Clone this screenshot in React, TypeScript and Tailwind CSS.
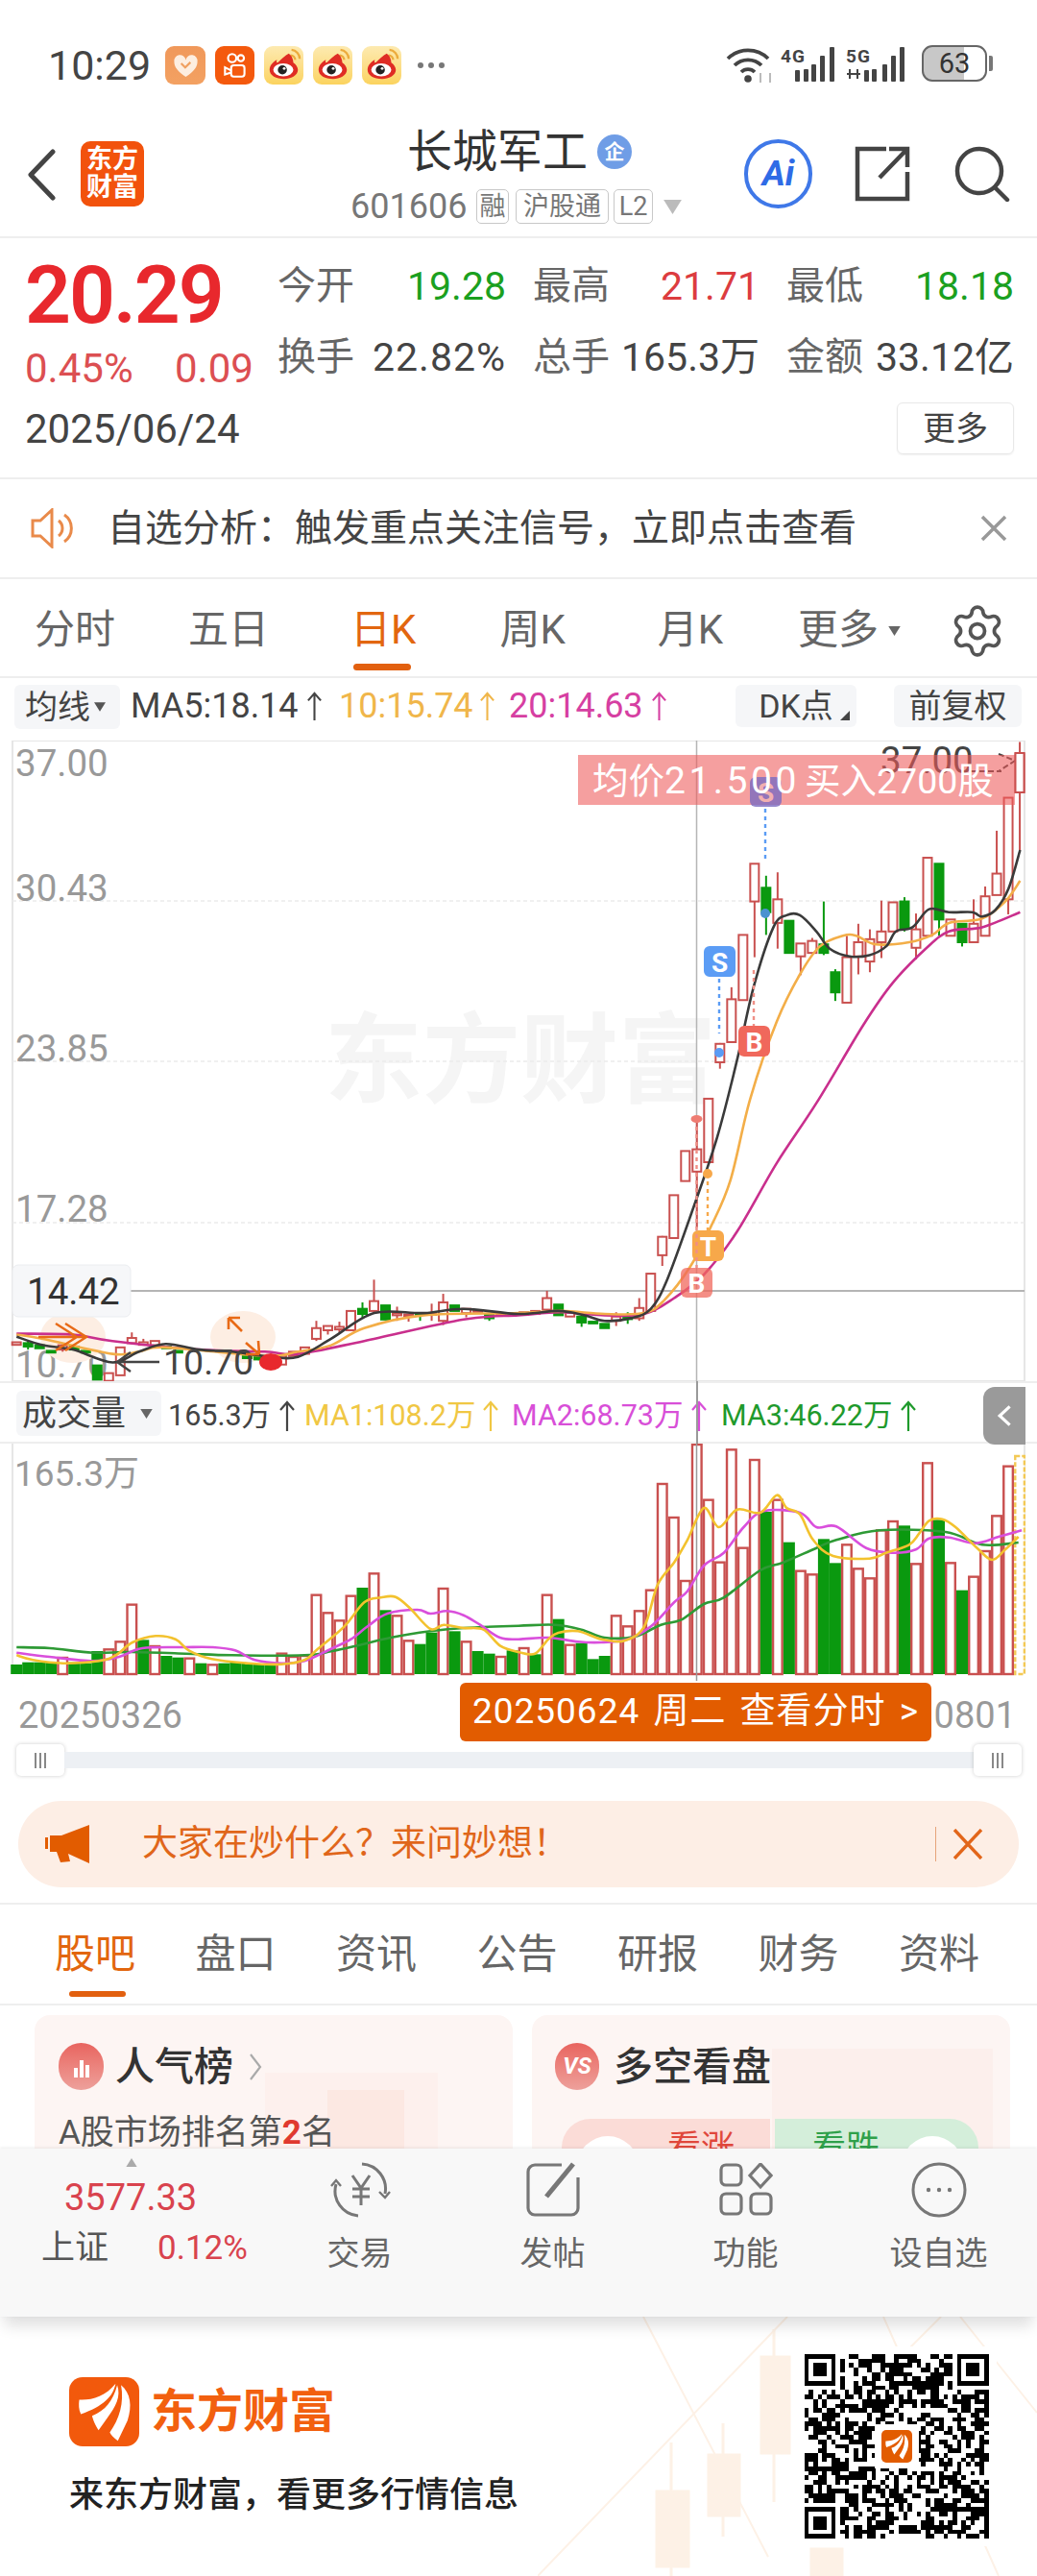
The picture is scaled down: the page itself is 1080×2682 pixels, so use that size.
import { Settings } from 'lucide-react';

type Pt = [number, number];

// x,y were read off the chart at different scales, these bring them back to page pixels
const priceY = (v: number) => 760 + v / 2.24;
const volY = (v: number) => 1430 + v / 3;
const barX = (i: number) => 17.2 + 12.01 * i;

const smooth = (pts: Pt[]) => {
  let d = `M${pts[0][0]} ${pts[0][1]}`;
  for (let i = 0; i < pts.length - 1; i++) {
    const p0 = pts[Math.max(i - 1, 0)];
    const p1 = pts[i];
    const p2 = pts[i + 1];
    const p3 = pts[Math.min(i + 2, pts.length - 1)];
    const c1x = p1[0] + (p2[0] - p0[0]) / 6;
    const c1y = p1[1] + (p2[1] - p0[1]) / 6;
    const c2x = p2[0] - (p3[0] - p1[0]) / 6;
    const c2y = p2[1] - (p3[1] - p1[1]) / 6;
    d += `C${c1x.toFixed(1)} ${c1y.toFixed(1)} ${c2x.toFixed(1)} ${c2y.toFixed(1)} ${p2[0].toFixed(1)} ${p2[1].toFixed(1)}`;
  }
  return d;
};

const line = (left: number[][], right: number[][], toY: (v: number) => number) =>
  smooth([
    ...left.map(([x, y]) => [x / 2.9, toY(y)] as Pt),
    ...right.map(([x, y]) => [540 + x / 2.9, toY(y)] as Pt),
  ]);

const ma5 = line(
  [[50,1415],[130,1435],[220,1445],[340,1475],[420,1450],[500,1432],[600,1445],[700,1450],[820,1462],[900,1462],[1000,1420],[1130,1360],[1280,1360],[1400,1350]],
  [[0,1362],[120,1355],[200,1365],[260,1378],[340,1372],[400,1350],[450,1280],[530,1110],[600,950],[660,770],[710,600],[770,460],[810,432],[850,432],[900,470],[940,510],[1000,528],[1060,525],[1110,505],[1140,470],[1190,460],[1240,418],[1300,425],[1370,425],[1400,435],[1440,420],[1480,370],[1515,280]],
  priceY,
);
const ma10 = line(
  [[50,1410],[130,1420],[340,1455],[420,1450],[500,1440],[800,1460],[900,1450],[1000,1435],[1100,1395],[1280,1365]],
  [[0,1360],[130,1355],[260,1362],[380,1360],[440,1330],[520,1250],[580,1160],[640,1050],[700,860],[780,680],[850,570],[910,505],[980,480],[1020,480],[1080,500],[1180,495],[1250,478],[1300,450],[1400,440],[1470,400],[1515,352]],
  priceY,
);
const ma20 = line(
  [[50,1408],[220,1410],[340,1425],[600,1445],[800,1450],[900,1455],[1100,1425],[1400,1375]],
  [[0,1365],[130,1358],[260,1365],[380,1362],[470,1325],[560,1270],[660,1170],[780,1010],[900,870],[1040,690],[1130,590],[1230,510],[1300,470],[1400,460],[1515,425]],
  priceY,
);

const vol1 = line(
  [[50,880],[100,895],[190,905],[300,898],[350,880],[400,840],[470,820],[530,830],[570,865],[640,892],[750,905],[850,908],[920,895],[960,860],[1040,790],[1100,715],[1150,700],[1195,698],[1240,735],[1300,798],[1340,785],[1400,795],[1460,800],[1510,850]],
  [[0,870],[50,875],[90,830],[120,810],[180,805],[250,830],[320,835],[380,790],[420,660],[470,590],[510,520],[560,420],[605,480],[660,425],[730,435],[780,380],[810,420],[850,440],[890,520],[950,570],[1060,578],[1110,560],[1180,535],[1210,500],[1240,460],[1280,455],[1320,480],[1385,545],[1430,582],[1470,550],[1510,510]],
  volY,
);
const vol2 = line(
  [[50,872],[150,885],[280,898],[360,885],[430,858],[560,855],[640,855],[710,865],[770,895],[850,905],[920,898],[1000,860],[1060,830],[1110,790],[1170,750],[1260,738],[1300,750],[1350,742],[1400,755],[1450,785],[1510,825]],
  [[0,830],[90,825],[180,838],[250,840],[330,830],[400,790],[470,715],[510,680],[560,600],[620,560],[680,480],[740,430],[850,435],[900,480],[960,478],[1050,545],[1130,560],[1200,550],[1240,515],[1300,512],[1380,530],[1450,510],[1520,490]],
  volY,
);
const vol3 = line(
  [[50,855],[150,858],[280,872],[400,870],[560,875],[700,880],[920,880],[1000,868],[1080,850],[1180,825],[1300,805],[1400,795]],
  [[0,788],[110,785],[190,800],[260,825],[350,822],[430,785],[490,770],[560,720],[620,700],[730,615],[800,590],[900,545],[960,520],[1090,490],[1290,495],[1400,535],[1510,528]],
  volY,
);

// index, body top, body bottom, wick top, wick bottom, up
const candles: [number, number, number, number, number, boolean][] = [
  [0,1428,1434,1428,1434,true],[1,1430,1438,1425,1445,false],[2,1435,1442,1435,1442,false],[3,1448,1452,1448,1452,false],
  [4,1435,1445,1430,1450,true],[5,1438,1445,1438,1445,false],[6,1448,1452,1448,1452,false],[7,1482,1515,1482,1515,false],
  [8,1500,1518,1500,1518,true],[9,1440,1505,1440,1505,true],[10,1418,1430,1405,1432,true],[11,1428,1434,1420,1434,true],
  [12,1425,1435,1425,1435,true],[13,1438,1442,1438,1442,false],[14,1448,1452,1448,1452,false],[20,1458,1465,1458,1465,false],
  [21,1460,1468,1450,1470,false],[23,1460,1480,1460,1480,true],[24,1450,1460,1450,1460,true],[25,1440,1455,1440,1455,true],
  [26,1395,1420,1378,1425,true],[27,1390,1400,1390,1410,true],[28,1392,1398,1380,1405,true],[29,1355,1400,1355,1400,true],
  [30,1350,1362,1335,1372,false],[31,1332,1355,1282,1360,true],[32,1342,1375,1342,1375,false],[33,1360,1365,1345,1378,true],
  [34,1363,1367,1363,1380,true],[35,1360,1364,1360,1378,false],[36,1360,1364,1338,1378,true],[37,1335,1378,1315,1388,true],
  [38,1342,1355,1342,1355,false],[39,1350,1360,1350,1370,true],[40,1353,1357,1353,1357,true],[41,1362,1372,1362,1378,false],
  [42,1360,1364,1360,1364,true],[44,1358,1362,1358,1362,true],[45,1355,1362,1355,1362,true],[46,1325,1352,1308,1355,true],
  [47,1340,1365,1340,1365,false],[48,1358,1368,1358,1368,true],[49,1368,1382,1368,1392,false],[50,1380,1384,1380,1384,false],
  [51,1385,1395,1385,1395,false],[52,1368,1378,1358,1390,true],[53,1370,1374,1358,1385,false],[54,1348,1372,1325,1378,true],
  [55,1268,1355,1268,1355,true],[56,1182,1225,1180,1250,true],[57,1085,1185,1085,1185,true],[58,982,1052,982,1052,true],
  [59,978,1030,905,1160,true],[60,860,1008,860,1008,true],[61,732,775,730,790,true],[62,628,728,600,728,true],
  [63,478,630,478,630,true],[64,312,400,312,530,true],[65,368,425,340,478,false],[66,395,450,332,510,true],
  [67,445,520,445,520,false],[68,498,528,498,572,true],[69,492,520,485,520,true],[70,500,520,400,525,false],
  [71,565,612,558,632,false],[72,530,636,480,636,true],[73,495,528,452,570,true],[74,488,540,465,565,true],
  [75,470,495,398,532,true],[76,402,470,402,470,true],[77,400,462,390,470,false],[78,465,508,428,535,true],
  [79,298,480,298,480,true],[80,312,442,312,480,false],[81,442,480,442,480,true],[82,452,495,452,505,false],
  [83,452,495,395,495,true],[84,388,480,365,480,true],[85,335,385,235,385,true],[86,158,395,158,430,true],
  [87,55,145,28,280,true],
];

const volumes: [number, boolean][] = [
  [912,false],[905,false],[905,false],[905,false],[888,true],[905,false],[908,false],[870,false],[862,true],[838,true],[722,true],
  [835,false],[852,true],[885,false],[890,false],[890,true],[908,false],[910,true],[908,false],[905,false],[908,false],[912,false],
  [912,false],[875,true],[885,true],[882,true],[692,true],[748,true],[772,true],[695,true],[672,false],[625,true],[742,false],
  [757,true],[835,true],[848,false],[812,false],[672,true],[808,false],[838,true],[870,false],[878,false],[885,true],[868,false],
  [858,true],[880,false],[692,true],[770,false],[848,true],[845,false],[895,false],[885,false],[757,true],[790,true],[742,true],
  [677,true],[345,true],[450,true],[648,true],[222,true],[395,true],[590,true],[238,true],[545,true],[270,true],[435,false],
  [395,true],[530,false],[617,true],[628,true],[520,false],[595,false],[535,true],[610,true],[640,true],[490,true],[462,true],
  [478,false],[595,true],[280,true],[460,false],[592,true],[680,false],[635,true],[555,true],[445,true],[290,true],
];

const RED_LINE = '#c9504f';
const GREEN = '#0a990f';

// stand-in QR, same density and finder squares as the real one
const qrPath = () => {
  const n = 41;
  let seed = 20250624;
  let d = '';
  const finder = (x: number, y: number) => {
    if (x < 0 || y < 0 || x > 6 || y > 6) return null;
    const ring = Math.min(x, y, 6 - x, 6 - y);
    return ring !== 1;
  };
  for (let y = 0; y < n; y++) {
    for (let x = 0; x < n; x++) {
      seed = (seed * 1103515245 + 12345) & 0x7fffffff;
      let on = (seed >> 16) % 100 < 52;
      const f = finder(x, y) ?? finder(x - (n - 7), y) ?? finder(x, y - (n - 7));
      if (f !== null) on = f;
      else if ((x === 7 && (y < 8 || y >= n - 8)) || (y === 7 && (x < 8 || x >= n - 8)) || (x === n - 8 && y < 8) || (y === n - 8 && x < 8)) on = false;
      if (on) d += `M${x} ${y}h1v1h-1z`;
    }
  }
  return d;
};

const Tri = ({ className }: { className: string }) => (
  <svg viewBox="0 0 10 8" className={className}>
    <polygon points="0,0 10,0 5,8" fill="currentColor" />
  </svg>
);

const Up = ({ className }: { className: string }) => (
  <svg viewBox="0 0 18 34" className={className} fill="none" stroke="currentColor" strokeWidth="2.2">
    <path d="M9 3v30M2 11l7-8 7 8" />
  </svg>
);

const Wing = ({ className }: { className: string }) => (
  <svg viewBox="0 0 215 215" className={className} fill="#fff">
    <path d="M30 70C70 72 110 60 143 20C135 60 105 90 35 115C28 100 28 85 30 70Z" />
    <path d="M148 25C160 60 145 90 115 130L90 165C80 150 72 130 70 120C110 105 135 75 148 25Z" />
    <path d="M160 25C190 50 195 90 180 135L150 198C138 190 128 180 125 172C155 130 170 80 160 25Z" />
  </svg>
);

const Weibo = () => (
  <div className="w-[41px] h-[40px] rounded-[9px] bg-gradient-to-b from-[#fdeab0] to-[#fbd35e] flex items-center justify-center">
    <svg viewBox="0 0 40 40" className="w-[38px] h-[38px]">
      <path d="M28 3a10 10 0 0 1 9 10M27 9a5 5 0 0 1 5 5" stroke="#ecab3c" strokeWidth="2.4" fill="none" />
      <path d="M25 7c3 2 5 6 5 10 3 2 5 5 5 8 0 6-8 10-15 10C11 35 4 31 4 25c0-5 4-9 8-11-1 3 0 4 2 2 3-3 7-7 11-9z" fill="#df2c24" />
      <ellipse cx="19" cy="25" rx="11" ry="7" fill="#fff" />
      <circle cx="18" cy="25" r="5" fill="#222" />
      <circle cx="20" cy="23.5" r="1.5" fill="#fff" />
    </svg>
  </div>
);

const QuoteCell = ({ label, value, color }: { label: string; value: string; color: string }) => (
  <>
    <span className="text-[#666]">{label}</span>
    <span className={`text-[41px] ${color}`}>{value}</span>
  </>
);

const SmallBadge = ({ text, className }: { text: string; className: string }) => (
  <span className={`h-[36px] border border-[#c8c8c8] rounded-[5px] text-[27px] leading-[34px] text-center whitespace-nowrap text-[#777] ${className}`}>{text}</span>
);

const BottomTab = ({ label, icon }: { label: string; icon: React.ReactNode }) => (
  <div className="flex flex-col items-center text-[34px] leading-[40px] text-[#666]">
    <div className="h-[66px] mt-[10px] flex items-center justify-center">{icon}</div>
    <span className="mt-[13px]">{label}</span>
  </div>
);

const Handle = () => (
  <div className="w-[50px] h-[33px] bg-white rounded-[5px] shadow-[0_0_4px_rgba(0,0,0,0.2)] flex items-center justify-center gap-[3px] shrink-0">
    <i className="w-[2px] h-[16px] bg-[#888]" />
    <i className="w-[2px] h-[16px] bg-[#888]" />
    <i className="w-[2px] h-[16px] bg-[#888]" />
  </div>
);

const App = () => {
  return (
    <div className="relative w-[1080px] h-[2682px] overflow-hidden bg-white font-['Roboto','Noto_Sans_CJK_SC',sans-serif] text-[#333]">
      {/* status bar */}
      <div className="h-[130px] pt-[47px] pl-[50px] pr-[46px] flex items-start">
        <span className="text-[43px] leading-[42px] text-[#444] w-[122px]">10:29</span>
        <div className="flex gap-[10px] mt-[1px]">
          <div className="w-[42px] h-[40px] rounded-[9px] bg-gradient-to-b from-[#f0985a] to-[#f3a162] flex items-center justify-center">
            <svg viewBox="0 0 24 24" className="w-[29px] h-[29px]">
              <path d="M12 21.5C5 17 2 13 2 8.5a5 5 0 0 1 10-1.5 5 5 0 0 1 10 1.5c0 4.500-3 8.500-10 13z" fill="#fdeee0" />
              <path d="M8 10l3.500 3.500L16 9" stroke="#f0a060" strokeWidth="1.8" fill="none" />
            </svg>
          </div>
          <div className="w-[41px] h-[40px] rounded-[9px] bg-[#f4590d] flex items-center justify-center">
            <svg viewBox="0 0 24 30" className="w-[26px] h-[32px]" fill="none" stroke="#fff" strokeWidth="2">
              <circle cx="9" cy="8" r="4" />
              <circle cx="17.5" cy="8" r="3" />
              <rect x="8" y="15" width="13" height="11" rx="2.500" />
              <path d="M8 20l-6-3v7l6-2" />
            </svg>
          </div>
          <Weibo />
          <Weibo />
          <Weibo />
        </div>
        <div className="ml-[17px] mt-[18px] flex gap-[5px]">
          <i className="w-[6px] h-[6px] rounded-full bg-[#777]" />
          <i className="w-[6px] h-[6px] rounded-full bg-[#777]" />
          <i className="w-[6px] h-[6px] rounded-full bg-[#777]" />
        </div>
        <div className="ml-auto flex items-start">
          <svg viewBox="0 0 60 40" className="w-[60px] h-[40px] mt-[1px]" fill="none" stroke="#444" strokeWidth="3.8">
            <path d="M2 13a30 30 0 0 1 42 0M9 20a20 20 0 0 1 28 0M16 27a10 10 0 0 1 14 0" />
            <circle cx="23" cy="34" r="3.800" fill="#444" stroke="none" />
            <path d="M36 28v10M46 28v10" stroke="#bbb" strokeWidth="2" />
          </svg>
          <svg viewBox="0 0 56 38" className="w-[56px] h-[38px] -ml-[3px] mt-[1px]">
            <text x="0" y="17" fontSize="19" fontWeight="700" fill="#444" textLength="25">4G</text>
            {[[15, 25], [24, 24], [32, 19], [41, 10], [51, 1]].map(([x, top]) => (
              <rect key={x} x={x} y={top} width="5" height={37 - top} rx="1" fill="#444" />
            ))}
          </svg>
          <svg viewBox="0 0 62 38" className="w-[62px] h-[38px] ml-[12px] mt-[1px]">
            <text x="0" y="17" fontSize="19" fontWeight="700" fill="#444" textLength="25">5G</text>
            <path d="M4 24v10M12 24v10M1 29h14" stroke="#444" strokeWidth="2" />
            {[[19, 25], [27, 24], [38, 19], [47, 10], [56, 1]].map(([x, top]) => (
              <rect key={x} x={x} y={top} width="5" height={37 - top} rx="1" fill="#444" />
            ))}
          </svg>
          <div className="ml-[17px] flex items-center">
            <div className="w-[68px] h-[38px] rounded-[11px] border-[2px] border-[#666] bg-[linear-gradient(90deg,#c8c8c8_66%,#fff_66%)] text-[29px] leading-[34px] text-center text-[#333]">63</div>
            <div className="w-[4px] h-[16px] bg-[#777] rounded-r-[2px] ml-[2px]" />
          </div>
        </div>
      </div>

      {/* title bar */}
      <div className="h-[118px] flex items-start border-b-[2px] border-[#eeeeee]">
        <svg viewBox="0 0 30 54" className="w-[30px] h-[54px] ml-[28px] mt-[25px]" fill="none" stroke="#444" strokeWidth="5" strokeLinecap="round" strokeLinejoin="round">
          <polyline points="27,3 4,27 27,51" />
        </svg>
        <div className="ml-[26px] mt-[17px] w-[66px] h-[68px] rounded-[10px] bg-[#f2520c] text-white text-[27px] leading-[29px] font-bold text-center pt-[5px]">
          东方
          <br />
          财富
        </div>
        <div className="ml-[215px] w-[348px] flex flex-col">
          <div className="flex items-center ml-[59px] h-[52px] mt-[2px]">
            <span className="text-[47px] leading-[52px] text-[#333]">长城军工</span>
            <span className="ml-[10px] w-[36px] h-[36px] rounded-full bg-[#6f9de6] text-white text-[21px] leading-[36px] text-center font-bold">企</span>
          </div>
          <div className="flex items-center mt-[13px] text-[#777]">
            <span className="text-[36px] leading-[36px] w-[131px]">601606</span>
            <SmallBadge text="融" className="w-[34px]" />
            <SmallBadge text="沪股通" className="w-[97px] ml-[7px]" />
            <SmallBadge text="L2" className="w-[41px] ml-[5px]" />
            <Tri className="w-[21px] h-[15px] ml-[10px] text-[#bbb]" />
          </div>
        </div>
        <div className="ml-[62px] mt-[15px] w-[71px] h-[72px] rounded-full border-[4px] border-[#3f78e8] flex items-center justify-center text-[#2f6be6] text-[37px] font-bold italic">Ai</div>
        <svg viewBox="0 0 58 58" className="w-[58px] h-[58px] ml-[44px] mt-[22px]" fill="none" stroke="#444" strokeWidth="4.5">
          <path d="M33 3H3v52h52V27" />
          <path d="M26 33L55 3M36 3h19v19" />
        </svg>
        <svg viewBox="0 0 58 58" className="w-[58px] h-[58px] ml-[46px] mt-[22px]" fill="none" stroke="#444" strokeWidth="4.5" strokeLinecap="round">
          <circle cx="26" cy="26" r="23" />
          <path d="M42 43l13 13" />
        </svg>
      </div>

      {/* quote */}
      <div className="h-[251px] flex border-b-[2px] border-[#eeeeee] text-[40px] leading-[40px]">
        <div className="w-[289px] pl-[26px] shrink-0">
          <div className="mt-[18px] text-[84px] leading-[84px] font-semibold text-[#e8282d] tracking-[-2px]">20.29</div>
          <div className="mt-[14px] flex text-[42px] text-[#dc4f52]">
            <span className="w-[156px]">0.45%</span>
            <span>0.09</span>
          </div>
          <div className="mt-[23px] text-[#444] text-[42px]">2025/06/24</div>
        </div>
        <div className="flex-1 pr-[25px] flex flex-col">
          <div className="mt-[30px] flex gap-[28px]">
            <div className="w-[238px] flex justify-between"><QuoteCell label="今开" value="19.28" color="text-[#1ba01f]" /></div>
            <div className="w-[236px] flex justify-between"><QuoteCell label="最高" value="21.71" color="text-[#dc3c3f]" /></div>
            <div className="w-[237px] flex justify-between"><QuoteCell label="最低" value="18.18" color="text-[#1ba01f]" /></div>
          </div>
          <div className="mt-[34px] flex gap-[28px]">
            <div className="w-[238px] flex justify-between"><QuoteCell label="换手" value="22.82%" color="text-[#444] tracking-[1px]" /></div>
            <div className="w-[236px] flex justify-between"><QuoteCell label="总手" value="165.3万" color="text-[#444]" /></div>
            <div className="w-[237px] flex justify-between"><QuoteCell label="金额" value="33.12亿" color="text-[#444]" /></div>
          </div>
          <button className="mt-[27px] self-end w-[122px] h-[54px] rounded-[6px] border border-[#e8e8e8] shadow-[0_1px_2px_rgba(0,0,0,0.06)] text-[34px] text-[#444]">更多</button>
        </div>
      </div>

      {/* notice */}
      <div className="h-[104px] flex items-center border-b-[2px] border-[#eeeeee] pl-[31px] pr-[31px]">
        <svg viewBox="0 0 48 42" className="w-[48px] h-[42px]" fill="none" stroke="#e98a4a" strokeWidth="3">
          <path d="M3 13h8l12-11v38L11 29H3z" />
          <path d="M30 13a10 10 0 0 1 0 16M36 7a17 17 0 0 1 0 28" />
        </svg>
        <span className="ml-[33px] text-[39px] leading-[44px] text-[#444]">自选分析：触发重点关注信号，立即点击查看</span>
        <svg viewBox="0 0 28 28" className="ml-auto w-[28px] h-[28px]" stroke="#999" strokeWidth="3.5">
          <path d="M2 2l24 24M26 2L2 26" />
        </svg>
      </div>

      {/* period tabs */}
      <div className="relative h-[103px] border-b-[2px] border-[#eeeeee] flex text-[42px] leading-[44px] pt-[31px] text-[#666]">
        <span className="ml-[36px]">分时</span>
        <span className="ml-[76px]">五日</span>
        <span className="ml-[85px] text-[#e2660f]">日K</span>
        <span className="ml-[87px]">周K</span>
        <span className="ml-[96px]">月K</span>
        <span className="ml-[78px]">更多</span>
        <Tri className="w-[13px] h-[10px] ml-[10px] mt-[18px] text-[#666]" />
        <Settings className="w-[60px] h-[60px] ml-[50px] -mt-[7px]" strokeWidth={1.5} color="#555" />
        <div className="absolute left-[368px] bottom-[6px] w-[60px] h-[7px] rounded-full bg-[#e2600f]" />
      </div>

      {/* MA legend */}
      <div className="h-[65px] pt-[7px] flex items-start text-[36px] leading-[44px] whitespace-nowrap">
        <div className="ml-[15px] w-[110px] h-[46px] rounded-[6px] bg-[#f5f6f8] flex items-center pl-[11px] text-[34px] text-[#444]">
          均线
          <Tri className="w-[12px] h-[10px] ml-[4px] text-[#555]" />
        </div>
        <span className="ml-[11px] w-[217px] flex items-center text-[#444]">MA5:18.14<Up className="w-[17px] h-[36px] ml-[8px]" /></span>
        <span className="w-[177px] flex items-center text-[#f0b64a]">10:15.74<Up className="w-[17px] h-[36px] ml-[6px]" /></span>
        <span className="w-[236px] flex items-center text-[#d63fa2]">20:14.63<Up className="w-[17px] h-[36px] ml-[8px]" /></span>
        <div className="w-[126px] h-[44px] rounded-[6px] bg-[#f5f6f8] text-[34px] text-[#444] text-center relative">
          DK点
          <span className="absolute right-[7px] bottom-[7px] border-[5px] border-transparent border-r-[#444] border-b-[#444]" />
        </div>
        <div className="ml-[39px] w-[133px] h-[44px] rounded-[6px] bg-[#f5f6f8] text-[34px] text-[#444] text-center">前复权</div>
      </div>

      {/* price chart */}
      <svg viewBox="0 771 1080 667" className="block w-[1080px] h-[667px]">
        <rect x="13" y="771" width="1054" height="667" fill="#fff" stroke="#e6e6e6" strokeWidth="2" />
        <text x="338" y="1140" fontSize="102" fontWeight="700" fill="#f5f5f5">东方财富</text>
        {[938, 1105, 1273].map((y) => (
          <line key={y} x1="13" x2="1067" y1={y} y2={y} stroke="#ebebeb" strokeWidth="1.5" strokeDasharray="4 3" />
        ))}
        <g fontSize="38.5" fill="#999">
          <text x="16" y="808">37.00</text>
          <text x="16" y="938">30.43</text>
          <text x="16" y="1105">23.85</text>
          <text x="16" y="1272">17.28</text>
          <text x="16" y="1434">10.70</text>
        </g>
        <line x1="13" x2="1067" y1="1344" y2="1344" stroke="#b5b5b5" strokeWidth="2" />
        <line x1="725.5" x2="725.5" y1="771" y2="1438" stroke="#b5b5b5" strokeWidth="1.5" />
        <ellipse cx="76" cy="1392" rx="34" ry="27" fill="#fdeee3" />
        <ellipse cx="253" cy="1392" rx="34" ry="27" fill="#fdeee3" />

        {candles.map(([i, top, bot, wt, wb, up]) => {
          const x = barX(i);
          const c = up ? RED_LINE : GREEN;
          return (
            <g key={i}>
              <line x1={x} x2={x} y1={priceY(wt)} y2={priceY(wb)} stroke={c} strokeWidth="2" />
              <rect x={x - 4.5} y={priceY(top)} width="9" height={Math.max(priceY(bot) - priceY(top), 1)} fill={up ? '#fff' : c} stroke={c} strokeWidth="2" />
            </g>
          );
        })}

        <path d={ma20} fill="none" stroke="#c92f8d" strokeWidth="2.6" />
        <path d={ma10} fill="none" stroke="#f3ae48" strokeWidth="2.6" />
        <path d={ma5} fill="none" stroke="#3a3a3a" strokeWidth="2.6" />

        {/* lowest price marker and cost arrows */}
        <path d="M122 1418h44M136 1408l-14 10 14 10" fill="none" stroke="#444" strokeWidth="2.4" />
        <text x="170" y="1431" fontSize="37.5" fill="#444">10.70</text>
        <path d="M68 1378l22 14-22 14M58 1378l22 14-22 14M40 1392h48" fill="none" stroke="#e86a16" strokeWidth="2.4" />
        <path d="M238 1372l14 14M238 1372v12M238 1372h12M270 1410l-1-14M270 1410h-14M270 1410l-14-12" fill="none" stroke="#e86a16" strokeWidth="2.6" />
        <ellipse cx="282" cy="1418" rx="12" ry="9" fill="#e8282d" />

        {/* buy/sell flags */}
        <line x1="749" x2="749" y1="1019" y2="1076" stroke="#5b9cf5" strokeWidth="2.4" strokeDasharray="4 4" />
        <rect x="733" y="985" width="33" height="32" rx="6" fill="#5b9cf5" />
        <text x="749.5" y="1012" fontSize="28" fontWeight="700" fill="#fff" textAnchor="middle">S</text>
        <circle cx="749" cy="1096" r="5" fill="#5b9cf5" />

        <line x1="797" x2="797" y1="842" y2="898" stroke="#5b9cf5" strokeWidth="2.4" strokeDasharray="4 4" />
        <circle cx="797" cy="951" r="5" fill="#4a93d0" />

        <line x1="785" x2="785" y1="1010" y2="1068" stroke="#ef8f86" strokeWidth="2.4" strokeDasharray="4 4" />
        <rect x="769" y="1068" width="33" height="32" rx="6" fill="#f0685c" />
        <text x="785.5" y="1095" fontSize="28" fontWeight="700" fill="#fff" textAnchor="middle">B</text>

        <line x1="737" x2="737" y1="1222" y2="1281" stroke="#f7a84a" strokeWidth="2.4" strokeDasharray="4 4" />
        <circle cx="737" cy="1222" r="5" fill="#f7a84a" />
        <rect x="721" y="1281" width="33" height="32" rx="6" fill="#f7a84a" />
        <text x="737.5" y="1308" fontSize="28" fontWeight="700" fill="#fff" textAnchor="middle">T</text>

        <line x1="725.5" x2="725.5" y1="1165" y2="1320" stroke="#ef8f86" strokeWidth="2.4" strokeDasharray="4 4" />
        <ellipse cx="725.5" cy="1165" rx="6" ry="4" fill="#ef7c72" />
        <rect x="709" y="1320" width="33" height="31" rx="6" fill="#f0685c" fillOpacity="0.75" />
        <text x="725.5" y="1346" fontSize="28" fontWeight="700" fill="#fff" textAnchor="middle">B</text>

        {/* high price + average cost ribbon */}
        <text x="917" y="805" fontSize="38.5" fill="#444">37.00</text>
        <path d="M1011 803h32M1040 785l17 7-17 11" fill="none" stroke="#444" strokeWidth="2" strokeDasharray="6 3" />
        <rect x="602" y="786" width="455" height="52" fill="#ee5a5a" fillOpacity="0.58" />
        <rect x="781" y="809" width="33" height="31" rx="6" fill="#7a6ac0" fillOpacity="0.8" />
        <text x="797.5" y="835" fontSize="28" fontWeight="700" fill="#f2b0b0" textAnchor="middle">S</text>
        <text x="617" y="826" fontSize="37.5" fill="#fff">均价<tspan letterSpacing="3.5" fontSize="39">21.500</tspan></text>
        <text x="838" y="826" fontSize="37.5" fill="#fff">买入2700股</text>
        <rect x="1057.5" y="784" width="9" height="41" fill="#fff" stroke={RED_LINE} strokeWidth="2" />

        <rect x="13" y="1317" width="123" height="54" rx="6" fill="#f6f7f9" stroke="#ebedf0" />
        <text x="28" y="1358" fontSize="38.5" fill="#333">14.42</text>
      </svg>

      {/* volume legend */}
      <div className="relative h-[65px] border-y-[2px] border-[#eeeeee] flex items-start text-[30.5px] leading-[36px] pt-[16px] whitespace-nowrap">
        <div className="absolute left-[17px] top-[8px] w-[151px] h-[47px] rounded-[6px] bg-[#f5f6f8] flex items-center pl-[6px] text-[36px] text-[#444]">
          成交量
          <Tri className="w-[15px] h-[10px] ml-[14px] text-[#666]" />
        </div>
        <span className="ml-[175px] w-[142px] flex items-center text-[#444]">165.3万<Up className="w-[18px] h-[34px] ml-[8px]" /></span>
        <span className="w-[216px] flex items-center text-[#f0c744]">MA1:108.2万<Up className="w-[18px] h-[34px] ml-[7px]" /></span>
        <span className="w-[218px] flex items-center text-[#d84fd8]">MA2:68.73万<Up className="w-[18px] h-[34px] ml-[8px]" /></span>
        <span className="flex items-center text-[#1f9a2c]">MA3:46.22万<Up className="w-[18px] h-[34px] ml-[8px]" /></span>
        <div className="absolute right-[12px] top-[4px] w-[44px] h-[60px] rounded-l-[12px] bg-[#9a9a9a] flex items-center justify-center">
          <svg viewBox="0 0 20 30" className="w-[16px] h-[26px]" fill="none" stroke="#fff" strokeWidth="4">
            <polyline points="17,3 4,15 17,27" />
          </svg>
        </div>
      </div>

      {/* volume chart */}
      <svg viewBox="0 1503 1080 250" className="block w-[1080px] h-[250px]">
        <line x1="13" x2="13" y1="1503" y2="1743" stroke="#e6e6e6" strokeWidth="2" />
        <line x1="1067" x2="1067" y1="1503" y2="1743" stroke="#e6e6e6" strokeWidth="2" />
        <text x="15" y="1547" fontSize="37" fill="#999">165.3万</text>
        {volumes.map(([top, up], i) => {
          const x = barX(i);
          const y = volY(top);
          return up ? (
            <rect key={i} x={x - 4.8} y={y} width="9.6" height={1743 - y} fill="#fff" stroke={RED_LINE} strokeWidth="2.4" />
          ) : (
            <rect key={i} x={x - 6} y={y - 1} width="12" height={1744 - y} fill={GREEN} />
          );
        })}
        <rect x={barX(87) - 4.8} y={volY(258)} width="9.6" height={1743 - volY(258)} fill="#fff" stroke="#f3c955" strokeWidth="2.4" strokeDasharray="5 2" />
        <line x1="725.5" x2="725.5" y1="1503" y2="1750" stroke="#9a9a9a" strokeWidth="1.5" />
        <path d={vol3} fill="none" stroke="#2e9a35" strokeWidth="2.6" />
        <path d={vol2} fill="none" stroke="#d94fdc" strokeWidth="2.6" />
        <path d={vol1} fill="none" stroke="#f3c22e" strokeWidth="2.6" />
      </svg>

      {/* crosshair runs up through the volume legend */}
      <div className="absolute left-[725px] top-[1438px] w-[1.5px] h-[65px] bg-[#9a9a9a]" />

      {/* date axis */}
      <div className="h-[63px] relative flex items-start text-[38px] leading-[40px] text-[#999]">
        <span className="ml-[19px] mt-[13px]">20250326</span>
        <div className="absolute left-[479px] top-[-1px] w-[491px] h-[61px] rounded-[6px] bg-[#e25c00] text-white text-[37px] leading-[60px] text-center whitespace-pre tracking-[1px] [word-spacing:4px]">
          20250624 周二 查看分时 {'>'}
        </div>
        <span className="ml-auto mr-[22px] mt-[13px]">0801</span>
      </div>

      {/* range slider */}
      <div className="flex items-center pl-[17px] pr-[16px] h-[33px]">
        <Handle />
        <div className="flex-1 h-[17px] bg-[#edf0f4]" />
        <Handle />
      </div>

      {/* ask box */}
      <div className="mt-[26px] mx-[19px] h-[90px] rounded-[45px] bg-[#fdeee5] flex items-center pl-[28px] pr-[37px]">
        <svg viewBox="0 0 46 40" className="w-[46px] h-[40px]" fill="#e25c00">
          <path d="M0 13h3v12H0zM5 11h12L46 0v40L24 30l2 8-10 1-4-11H5z" />
        </svg>
        <span className="ml-[55px] text-[37px] leading-[44px] text-[#e0661a]">大家在炒什么？来问妙想！</span>
        <i className="ml-auto w-[1.5px] h-[36px] bg-[#e6a47a]" />
        <svg viewBox="0 0 32 32" className="ml-[17px] w-[32px] h-[32px]" stroke="#e2661a" strokeWidth="3.4">
          <path d="M2 1l28 30M30 1L2 31" />
        </svg>
      </div>

      {/* detail tabs */}
      <div className="relative mt-[16px] h-[107px] border-y-[2px] border-[#eeeeee] flex pl-[57px] gap-[62.5px] pt-[29px] text-[42px] leading-[46px] text-[#666]">
        <span className="text-[#e2660f]">股吧</span>
        <span>盘口</span>
        <span>资讯</span>
        <span>公告</span>
        <span>研报</span>
        <span>财务</span>
        <span>资料</span>
        <div className="absolute left-[72px] bottom-[7px] w-[59px] h-[6px] rounded-full bg-[#e2600f]" />
      </div>

      {/* cards, cut off by the bottom bar */}
      <div className="h-[149px] overflow-hidden flex gap-[20px] pl-[36px] pt-[10px]">
        <div className="relative shrink-0 w-[498px] h-[180px] rounded-[16px] bg-[#fdf5f3] overflow-hidden">
          <div className="absolute left-[240px] top-[60px] w-[180px] h-[120px] bg-[#fdf0ed]" />
          <div className="absolute left-[305px] top-[78px] w-[80px] h-[90px] bg-[#fce8e2]" />
          <div className="relative flex items-center pl-[25px] pt-[29px]">
            <div className="w-[47px] h-[49px] rounded-full bg-gradient-to-b from-[#e8645f] to-[#eda09b] flex items-end justify-center gap-[2px] pb-[13px]">
              <i className="w-[4px] h-[10px] bg-white" />
              <i className="w-[4px] h-[18px] bg-white" />
              <i className="w-[4px] h-[13px] bg-white" />
            </div>
            <span className="ml-[12px] text-[41px] leading-[46px] font-medium text-[#333]">人气榜</span>
            <svg viewBox="0 0 14 30" className="ml-[16px] w-[14px] h-[30px]" fill="none" stroke="#aaa" strokeWidth="2.2">
              <polyline points="2,2 12,15 2,28" />
            </svg>
          </div>
          <div className="relative mt-[24px] pl-[25px] text-[35px] leading-[42px] text-[#555]">
            A股市场排名第<span className="font-bold text-[#e0392f]">2</span>名
          </div>
        </div>
        <div className="relative shrink-0 w-[498px] h-[180px] rounded-[16px] bg-[#fdf5f3] overflow-hidden">
          <div className="absolute left-[250px] top-[35px] w-[230px] h-[120px] bg-[#fcefec]" />
          <div className="relative flex items-center pl-[24px] pt-[29px]">
            <div className="w-[46px] h-[49px] rounded-full bg-gradient-to-b from-[#e8645f] to-[#eda09b] text-white text-[24px] leading-[49px] text-center font-bold italic">VS</div>
            <span className="ml-[15px] text-[41px] leading-[46px] font-medium text-[#333]">多空看盘</span>
          </div>
          <div className="relative mt-[30px] ml-[31px] w-[434px] h-[60px] flex gap-[5px] text-[35px] leading-[42px]">
            <div className="relative w-[217px] h-[60px] bg-[#fbdcd7] rounded-l-[30px] text-[#e0473b] pl-[110px] pt-[10px] overflow-hidden">
              <span className="absolute left-[16px] top-[18px] w-[64px] h-[64px] rounded-full bg-white" />
              看涨
            </div>
            <div className="relative w-[212px] h-[60px] bg-[#d4eeda] rounded-r-[30px] text-[#2fa04a] pl-[39px] pt-[10px] overflow-hidden">
              <span className="absolute right-[16px] top-[18px] w-[64px] h-[64px] rounded-full bg-white" />
              看跌
            </div>
          </div>
        </div>
      </div>

      {/* bottom bar */}
      <div className="relative z-10 h-[175px] bg-[#f8f8f8] shadow-[0_-1px_3px_rgba(0,0,0,0.08),0_14px_14px_-4px_rgba(0,0,0,0.12)] grid grid-cols-[274px_201px_201px_201px_201px]">
        <div className="relative pl-[43px]">
          <Tri className="absolute left-[128px] top-[10px] w-[18px] h-[9px] rotate-180 text-[#aaa]" />
          <div className="pl-[24px] pt-[31px] text-[38px] leading-[40px] text-[#d9434e]">3577.33</div>
          <div className="mt-[13px] flex text-[35px] leading-[40px]">
            <span className="text-[#555]">上证</span>
            <span className="ml-[51px] text-[#d9434e]">0.12%</span>
          </div>
        </div>
        <BottomTab
          label="交易"
          icon={
            <svg viewBox="0 0 64 60" className="w-[64px] h-[60px]" fill="none" stroke="#777" strokeWidth="3">
              <path d="M34 3a26 26 0 0 1 24 31M30 57A26 26 0 0 1 7 24" />
              <path d="M2 26l5-6 5 6M52 32l6 6 5-6" strokeWidth="2.4" />
              <path d="M24 15l9 13 9-13M33 28v18M24 29h18M24 37h18" />
            </svg>
          }
        />
        <BottomTab
          label="发帖"
          icon={
            <svg viewBox="0 0 58 58" className="w-[58px] h-[58px]" fill="none" stroke="#777" strokeWidth="3.2">
              <path d="M38 3H10a7 7 0 0 0-7 7v38a7 7 0 0 0 7 7h38a7 7 0 0 0 7-7V16" />
              <path d="M22 36L50 2" strokeWidth="5" />
            </svg>
          }
        />
        <BottomTab
          label="功能"
          icon={
            <svg viewBox="0 0 56 56" className="w-[56px] h-[56px]" fill="none" stroke="#777" strokeWidth="3.2">
              <rect x="2" y="2" width="21" height="21" rx="5" />
              <rect x="2" y="32" width="21" height="21" rx="5" />
              <rect x="33" y="32" width="21" height="21" rx="5" />
              <path d="M43 1l11 12-11 12-11-12z" />
            </svg>
          }
        />
        <BottomTab
          label="设自选"
          icon={
            <svg viewBox="0 0 58 58" className="w-[58px] h-[58px]" fill="none" stroke="#777" strokeWidth="3">
              <circle cx="29" cy="29" r="27" />
              <circle cx="18" cy="29" r="2.2" fill="#777" stroke="none" />
              <circle cx="29" cy="29" r="2.2" fill="#777" stroke="none" />
              <circle cx="40" cy="29" r="2.2" fill="#777" stroke="none" />
            </svg>
          }
        />
      </div>

      {/* share footer */}
      <div className="relative h-[270px] pl-[72px] pt-[63px]">
        <svg viewBox="560 2412 520 270" className="absolute right-0 top-0 w-[520px] h-[270px]" fill="#fdf1e6" stroke="#fdf1e6">
          <path d="M670 2412l130 250M820 2412l-260 270M920 2412l120 270M980 2412l-60 60M1000 2412l80 100" fill="none" strokeWidth="2" />
          <path d="M806 2425v180M753 2523v118M699 2543v139" fill="none" strokeWidth="3" />
          <rect x="792" y="2453" width="31" height="102" />
          <rect x="737" y="2555" width="34" height="65" />
          <rect x="683" y="2593" width="35" height="80" />
          <rect x="844" y="2653" width="34" height="29" />
        </svg>
        <div className="relative flex items-center">
          <div className="w-[73px] h-[72px] rounded-[14px] bg-[#f2590c]">
            <Wing className="w-[73px] h-[72px]" />
          </div>
          <span className="ml-[12px] text-[48px] leading-[50px] font-bold text-[#f2600f]">东方财富</span>
        </div>
        <div className="relative mt-[30px] text-[36px] leading-[42px] font-medium text-[#222]">来东方财富，看更多行情信息</div>
        <div className="absolute left-[829px] top-[31px] w-[209px] h-[208px] bg-white flex items-center justify-center">
          <svg viewBox="0 0 41 41" className="w-[193px] h-[192px]" shapeRendering="crispEdges">
            <path d={qrPath()} fill="#000" />
          </svg>
          <div className="absolute w-[46px] h-[46px] bg-white flex items-center justify-center">
            <div className="w-[32px] h-[34px] rounded-[5px] bg-[#e25c00]">
              <Wing className="w-[32px] h-[34px]" />
            </div>
          </div>
        </div>
      </div>
    </div>
  );
};

export default App;
